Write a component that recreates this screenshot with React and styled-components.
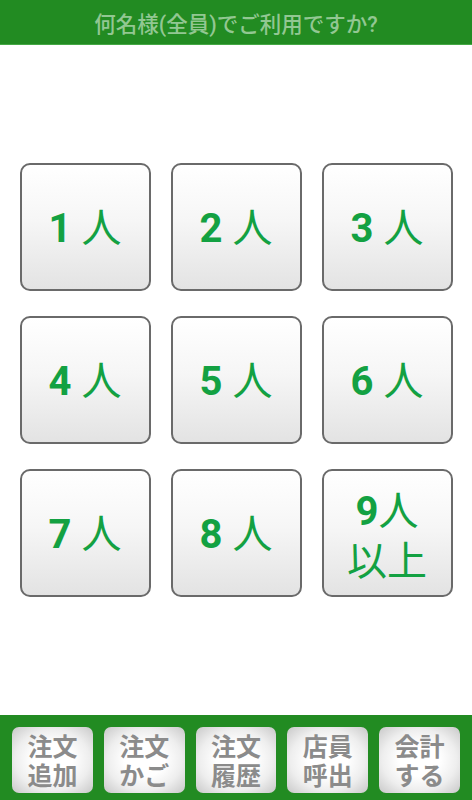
import React from "react";
import styled, { createGlobalStyle } from "styled-components";

const Global = createGlobalStyle`
  html, body { margin: 0; padding: 0; background: #fff; }
  body { font-family: Roboto, "Noto Sans CJK JP", sans-serif; }
`;

const Page = styled.div`
  display: flex;
  flex-direction: column;
  height: 800px;
  width: 472px;
`;

const Header = styled.header`
  height: 44px;
  background: #228b22;
  border-bottom: 1px solid #45a845;
  display: flex;
  align-items: center;
  justify-content: center;
  color: #92c792;
  font-family: Roboto, "Noto Sans CJK JP", sans-serif;
  font-size: 21.5px;
  font-weight: 500;
`;

const Main = styled.main`
  flex: 1;
  padding-top: 118px;
  display: flex;
  justify-content: center;
  align-items: flex-start;
`;

const Grid = styled.div`
  display: grid;
  grid-template-columns: repeat(3, 131px);
  grid-auto-rows: 128px;
  column-gap: 20px;
  row-gap: 25px;
`;

const CountButton = styled.button`
  box-sizing: border-box;
  border: 2px solid #6a6a6a;
  border-radius: 10px;
  background: linear-gradient(to bottom, #ffffff 0%, #f6f6f6 45%, #e3e3e3 100%);
  color: #13a142;
  font-family: Roboto, "Noto Sans CJK JP", sans-serif;
  font-weight: 700;
  font-size: 40px;
  line-height: 46px;
  display: flex;
  flex-direction: column;
  align-items: center;
  justify-content: center;
  padding: 0;
  white-space: pre;
`;

const Unit = styled.span`
  font-family: "Noto Sans CJK JP", sans-serif;
  font-weight: 400;
`;

const Footer = styled.footer`
  height: 85px;
  box-sizing: border-box;
  background: #228b22;
  padding: 12px 12px 0;
  display: grid;
  grid-template-columns: repeat(5, 1fr);
  column-gap: 11px;
  align-items: start;
`;

const NavButton = styled.button`
  height: 66px;
  border: none;
  border-radius: 7px;
  background: radial-gradient(ellipse at center, #ffffff 35%, #eeeeee 65%, #c8c8c8 100%);
  color: #8b8b8b;
  font-family: "Noto Sans CJK JP", sans-serif;
  font-weight: 700;
  font-size: 25px;
  line-height: 29px;
  padding: 0;
  display: flex;
  flex-direction: column;
  align-items: center;
  justify-content: center;
`;

const counts = ["1", "2", "3", "4", "5", "6", "7", "8"];
const nav = [
  ["注文", "追加"],
  ["注文", "かご"],
  ["注文", "履歴"],
  ["店員", "呼出"],
  ["会計", "する"],
];

export default function App() {
  return (
    <Page>
      <Global />
      <Header>何名様(全員)でご利用ですか?</Header>
      <Main>
        <Grid>
          {counts.map((c) => (
            <CountButton key={c}>
              <span>
                {c} <Unit>人</Unit>
              </span>
            </CountButton>
          ))}
          <CountButton>
            <span>
              9<Unit>人</Unit>
            </span>
            <Unit>以上</Unit>
          </CountButton>
        </Grid>
      </Main>
      <Footer>
        {nav.map(([a, b]) => (
          <NavButton key={a + b}>
            <span>{a}</span>
            <span>{b}</span>
          </NavButton>
        ))}
      </Footer>
    </Page>
  );
}
